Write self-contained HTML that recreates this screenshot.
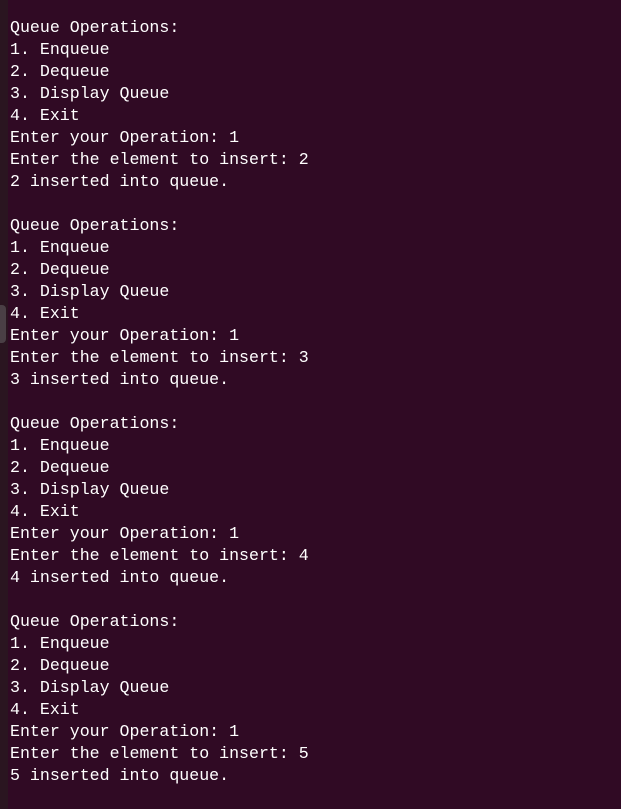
<!DOCTYPE html>
<html><head><style>
html,body{margin:0;padding:0}
body{width:621px;height:809px;background:#300a24;position:relative;overflow:hidden}
.strip{position:absolute;left:0;top:0;width:8px;height:809px;background:#2a1520}
.knob{position:absolute;left:0;top:305px;width:6px;height:38px;background:#4a3f45;border-radius:0 4px 4px 0}
pre{position:absolute;left:10px;top:17px;margin:0;font-family:"Liberation Mono",monospace;font-size:16.6px;line-height:22px;color:#ffffff}
</style></head><body>
<div class="strip"></div><div class="knob"></div>
<pre>Queue Operations:
1. Enqueue
2. Dequeue
3. Display Queue
4. Exit
Enter your Operation: 1
Enter the element to insert: 2
2 inserted into queue.

Queue Operations:
1. Enqueue
2. Dequeue
3. Display Queue
4. Exit
Enter your Operation: 1
Enter the element to insert: 3
3 inserted into queue.

Queue Operations:
1. Enqueue
2. Dequeue
3. Display Queue
4. Exit
Enter your Operation: 1
Enter the element to insert: 4
4 inserted into queue.

Queue Operations:
1. Enqueue
2. Dequeue
3. Display Queue
4. Exit
Enter your Operation: 1
Enter the element to insert: 5
5 inserted into queue.</pre>
</body></html>
